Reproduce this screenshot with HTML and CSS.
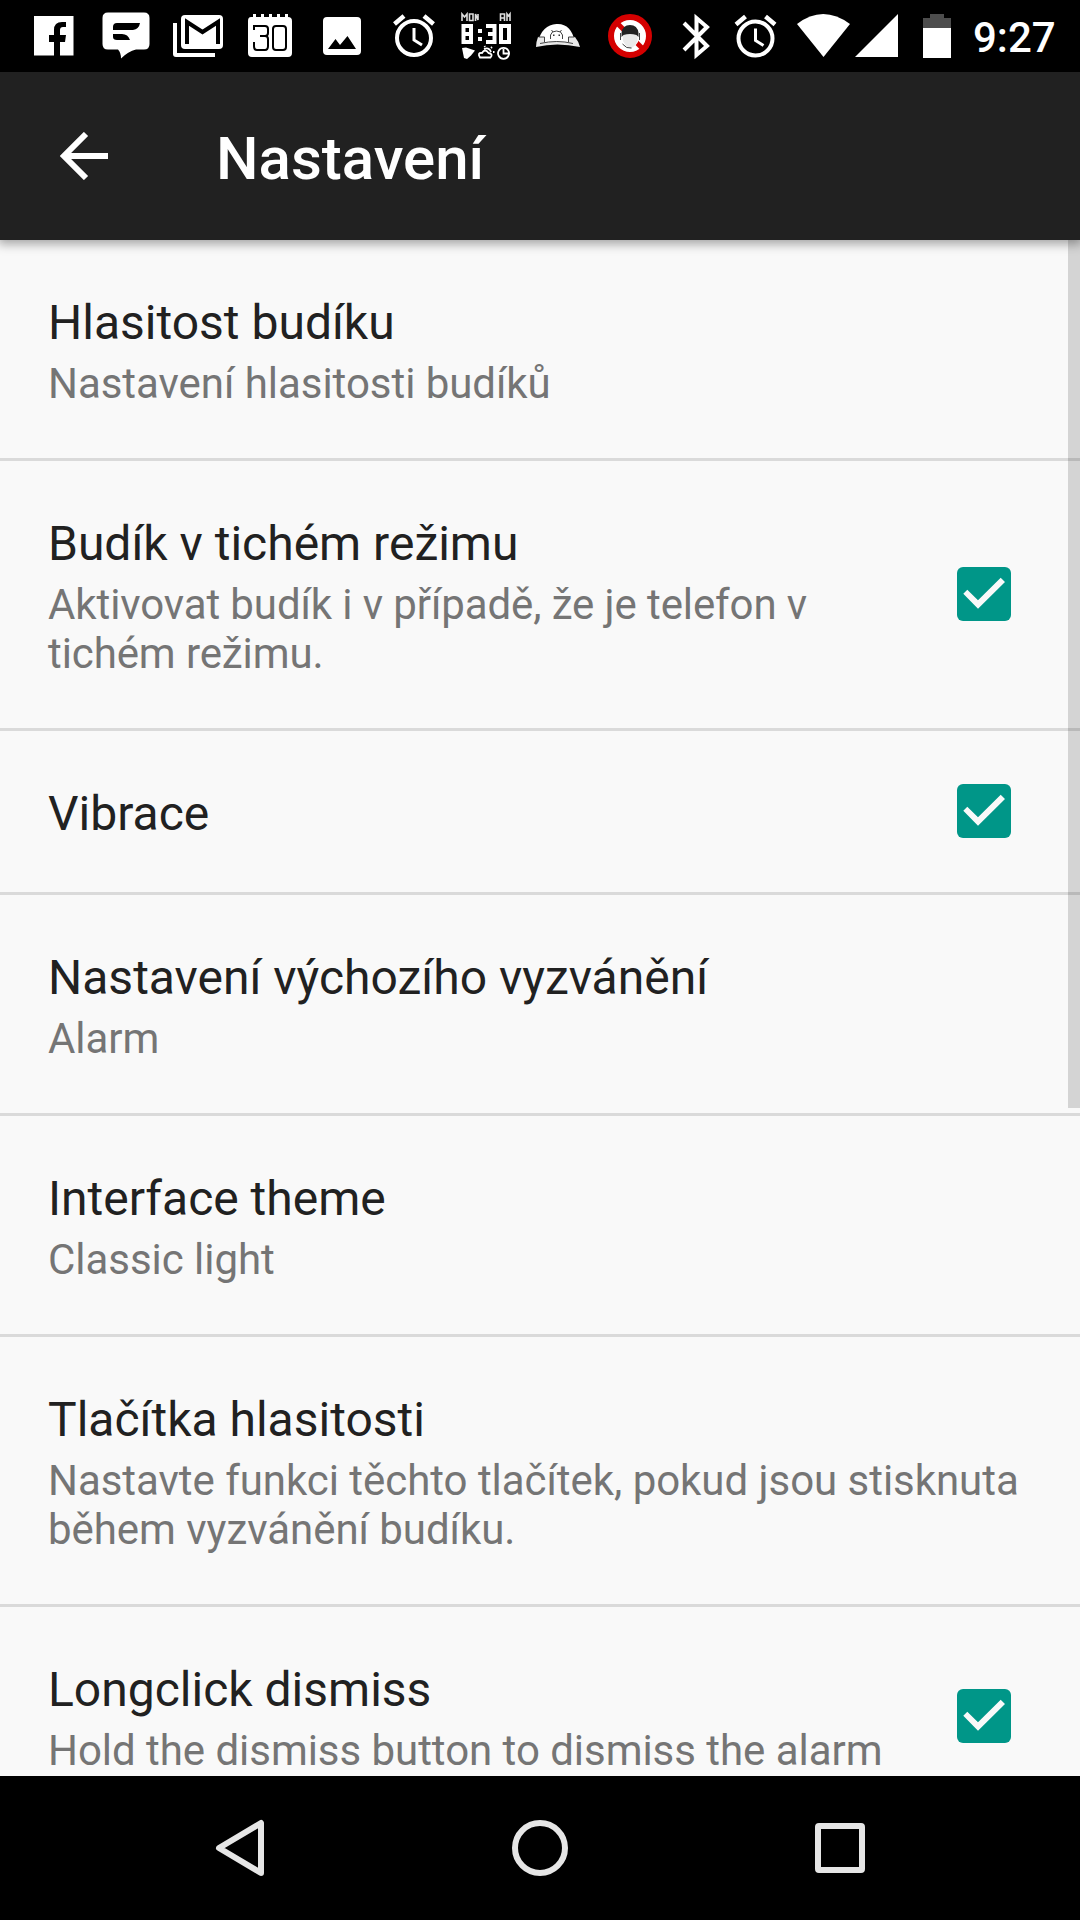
FILE: index.html
```html
<!DOCTYPE html>
<html lang="cs">
<head>
<meta charset="utf-8">
<title>Nastavení</title>
<link rel="stylesheet" href="styles.css">
</head>
<body>
<div class="screen">
  <header class="status">
    <svg class="status-icons" width="960" height="72" viewBox="0 0 960 72" fill="#fff" aria-hidden="true">
      <!-- facebook -->
      <path fill-rule="evenodd" d="M34 16h39.500v39.500H60V42h5l1-7h-6v-5q0-3 3-3h3v-5h-4q-8 0-8 8v5h-5v7h5v13.500H34z"/>
      <!-- message -->
      <path fill-rule="evenodd" d="M108 12.500h36q5.500 0 5.500 5.500v26q0 5.500-5.500 5.500h-8q-8 2-15 9q0-6-3-9h-10q-5.500 0-5.500-5.500V18q0-5.500 5.500-5.500zM117 23q-4 0-4 4v3h20q6-1 7-7zM113 34v3q0 3 4 3h13q-2-6-8-6z"/>
      <!-- mail -->
      <path d="M173 23h4v30h38v4h-39q-3 0-3-3z"/>
      <rect x="181" y="15" width="42" height="34" rx="4"/>
      <path d="M187 44V22l15.500 10L218 22v22" fill="none" stroke="#000" stroke-width="4"/>
      <!-- calendar -->
      <path d="M251 17h2v-3h3v3h5v-3h3v3h5v-3h3v3h5v-3h3v3h5v-3h3v3q4 0 4 4v32q0 4-4 4h-36q-4 0-4-4V21q0-4 3-4z"/>
      <path d="M254 30v-4h11q3 0 3 3v4q0 3-3 3h-5h5q3 0 3 3v7q0 4-3 4h-8q-3 0-3-4v-4M276 26h7q3 0 3 3v18q0 3-3 3h-7q-3 0-3-3V29q0-3 3-3z" fill="none" stroke="#000" stroke-width="2"/>
      <!-- picture -->
      <path fill-rule="evenodd" d="M327 17h30q4 0 4 4v30q0 4-4 4h-30q-4 0-4-4V21q0-4 4-4zM328 49h28l-8.500-13-7.500 9-4.500-6z"/>
      <!-- alarms -->
      <g id="alarm" fill="none" stroke="#fff">
        <circle cx="414" cy="38" r="17" stroke-width="4"/>
        <path d="M414 28v12l8 5" stroke-width="3"/>
        <path d="M394.500 24l9.500-8M433.500 24l-9.500-8" stroke-width="4.500"/>
      </g>
      <use href="#alarm" x="341.500" y=".5"/>
      <!-- digital clock -->
      <g fill="none" stroke="#ddd" stroke-width="1.600">
        <path d="M462 21v-7l2.500 3 2.500-3v7M469.500 14h3.500v6.500h-3.500zM475.500 21v-7l2.500 6v-6M500.500 21v-7h4v7M500.500 18h4M507 21v-7l1.500 2 1.500-2v7"/>
      </g>
      <g fill="none" stroke="#fff">
        <path stroke-width="4" d="M463.500 26h7.500v16h-7.500zM463.500 34h7.500M486 26h8.500v16H486M488 34h6M501 26h8v16h-8z"/>
        <path stroke-width="1.800" d="M503.500 47.800a5.500 5.500 0 1 0 .1 0zM503.500 49v4.500h5"/>
        <path stroke-width="1.800" d="M480 57.500q-3-5 2-4.500q3-5 6.500 0q5 1 2 4.500zM484 49q5-2 7 3M485 47l-.5-1M491 48l1-1M493 52h1.500"/>
      </g>
      <path d="M478 29h4v4h-4zM478 37h4v4h-4zM462 48l4-.500 9 3-4 5-4 3.500-3-1z"/>
      <!-- android dome -->
      <path d="M538 42q4-17 18.500-18T575 42z"/>
      <path d="M538 37h7v5h23v-5h7q4 5 5 10-23-5-44 0 0-5 2-10z" fill="#e8e8e8"/>
      <g fill="none" stroke="#444" stroke-width="1"><path d="M550.500 39v-4q1-4 6-4t6 4v4M551.500 30l1.500 2M561.500 30l-1.500 2M544.500 42v-5h-6M568.500 42v-5h6M540 43.500q17-4 33 0"/></g>
      <path d="M553 34.500h1.500V36H553zM558.500 34.500h1.500V36h-1.500z" fill="#333"/>
      <!-- blocked caller -->
      <circle cx="630" cy="36" r="19" fill="#fff" stroke="#d40000" stroke-width="6"/>
      <path d="M616.500 22.500l27 27" stroke="#d40000" stroke-width="5"/>
      <path d="M620.500 34h19l-1.500 8-3 4-5 3-5-3-3-4z"/>
      <path d="M623 34h14.500v7l-2 4-5 4-5-4-2.500-4z" fill="#eaeaea"/>
      <path d="M621.500 37v-4q1-8 8.500-8t8.500 8v4l-2-2q-6.500-2-13 0z" fill="#222"/>
      <path d="M620.500 33v7M639.500 33v7M622.500 44q4 5 9 4" fill="none" stroke="#444"/>
      <!-- bluetooth -->
      <path d="M684 23l23 23-10.500 9V18L707 27 684 50" fill="none" stroke="#fff" stroke-width="4"/>
      <!-- wifi, signal, battery -->
      <path d="M797 24q26-20 53 0l-26.500 33z"/>
      <path d="M898 14v43h-43z"/>
      <path d="M923 28V18h7v-4h14v4h7v10z" fill="#4d4d4d"/>
      <path d="M923 28h28v30h-28z"/>
    </svg>
    <span class="clock">9:27</span>
  </header>

  <div class="toolbar">
    <svg class="back" width="48" height="48" viewBox="0 0 48 48" fill="none" stroke="#fff" stroke-width="6"><path d="M48 24H5M26 2L4 24l22 22"/></svg>
    <h1 class="toolbar-title">Nastavení</h1>
  </div>

  <main class="list">
    <section class="row"><div class="text"><h2 class="title">Hlasitost budíku</h2><p class="summary">Nastavení hlasitosti budíků</p></div></section>
    <section class="row"><div class="text"><h2 class="title">Budík v tichém režimu</h2><p class="summary tight">Aktivovat budík i v případě, že je telefon v<br>tichém režimu.</p></div>
      <svg class="check" viewBox="0 0 54 54"><rect width="54" height="54" rx="6"/><path d="M6.300 26.700l4-4L21 33.300l22.700-22.600L48 15 21 41.700z"/></svg></section>
    <section class="row"><div class="text"><h2 class="title">Vibrace</h2></div>
      <svg class="check" viewBox="0 0 54 54"><rect width="54" height="54" rx="6"/><path d="M6.300 26.700l4-4L21 33.300l22.700-22.600L48 15 21 41.700z"/></svg></section>
    <section class="row"><div class="text"><h2 class="title">Nastavení výchozího vyzvánění</h2><p class="summary">Alarm</p></div></section>
    <section class="row"><div class="text"><h2 class="title">Interface theme</h2><p class="summary">Classic light</p></div></section>
    <section class="row"><div class="text"><h2 class="title">Tlačítka hlasitosti</h2><p class="summary">Nastavte funkci těchto tlačítek, pokud jsou stisknuta<br>během vyzvánění budíku.</p></div></section>
    <section class="row"><div class="text"><h2 class="title">Longclick dismiss</h2><p class="summary">Hold the dismiss button to dismiss the alarm</p></div>
      <svg class="check" viewBox="0 0 54 54"><rect width="54" height="54" rx="6"/><path d="M6.300 26.700l4-4L21 33.300l22.700-22.600L48 15 21 41.700z"/></svg></section>
    <div class="scrollbar"></div>
  </main>

  <nav class="nav">
    <svg width="60" height="60" viewBox="0 0 60 60"><path d="M51 5v50L9 30z"/></svg>
    <svg width="60" height="60" viewBox="0 0 60 60"><circle cx="30" cy="30" r="25"/></svg>
    <svg width="60" height="60" viewBox="0 0 60 60"><rect x="8" y="8" width="44" height="44" rx="1"/></svg>
  </nav>
</div>
</body>
</html>
```
FILE: styles.css
```css
body { margin: 0; font-family: Roboto, "Noto Sans", sans-serif; }
h1, h2, p { margin: 0; font-weight: 400; }
.screen { width: 1080px; height: 1920px; display: flex; flex-direction: column; overflow: hidden; background: #f9f9f9; }
.status { height: 72px; flex: none; display: flex; align-items: center; background: #000; color: #fff; }
.status-icons { flex: none; }
.clock { margin-left: 13px; padding-top: 4px; font-size: 42px; font-weight: 500; line-height: 50px; }
.toolbar { height: 168px; flex: none; display: flex; align-items: center; box-sizing: border-box; padding: 0 60px; background: #212121; color: #fff; box-shadow: 0 2px 10px 2px rgba(0, 0, 0, .35); z-index: 1; }
.back { flex: none; }
.toolbar-title { margin-left: 108px; padding-top: 6px; font-size: 60px; font-weight: 500; line-height: 70px; }
.list { position: relative; flex: 1; min-height: 0; overflow: hidden; }
.row { display: flex; align-items: center; border-bottom: 3px solid #dadada; padding: 0 69px 0 48px; }
.text { flex: 1; padding: 55px 0 50px; white-space: nowrap; }
.title { font-size: 48px; line-height: 56px; color: #212121; }
.summary { margin-top: 8px; font-size: 42px; line-height: 49px; letter-spacing: -.04px; color: #757575; }
.summary.tight { letter-spacing: -.1px; }
.check { width: 54px; height: 54px; flex: none; fill: #f9f9f9; }
.row:not(:last-of-type) .check { margin-bottom: 1px; }
.check rect { fill: #009688; }
.scrollbar { position: absolute; top: 0; right: 0; width: 12px; height: 868px; background: rgba(0, 0, 0, .15); }
.nav { height: 144px; flex: none; display: flex; align-items: center; justify-content: center; gap: 240px; background: #000; }
.nav svg { fill: none; stroke: #e6e6e6; stroke-width: 6; stroke-linejoin: round; }
```
